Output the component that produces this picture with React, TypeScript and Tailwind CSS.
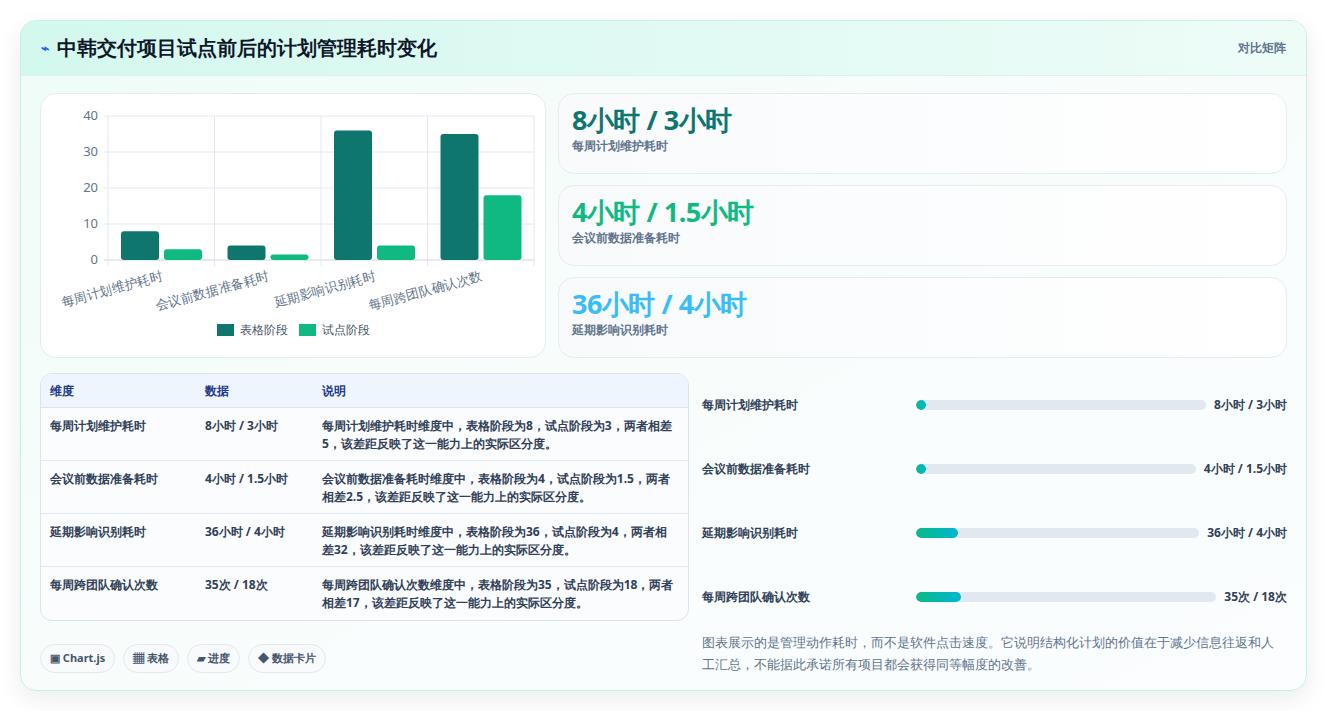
import React from 'react';

const cats = ['每周计划维护耗时', '会议前数据准备耗时', '延期影响识别耗时', '每周跨团队确认次数'];
const before = [8, 4, 36, 35];
const after = [3, 1.5, 4, 18];

const stats = [
  { v: '8小时 / 3小时', l: '每周计划维护耗时', c: 'text-[#0f766e]' },
  { v: '4小时 / 1.5小时', l: '会议前数据准备耗时', c: 'text-[#10b981]' },
  { v: '36小时 / 4小时', l: '延期影响识别耗时', c: 'text-[#38bdf8]' },
];

const rows = [
  ['每周计划维护耗时', '8小时 / 3小时', '每周计划维护耗时维度中，表格阶段为8，试点阶段为3，两者相差5，该差距反映了这一能力上的实际区分度。'],
  ['会议前数据准备耗时', '4小时 / 1.5小时', '会议前数据准备耗时维度中，表格阶段为4，试点阶段为1.5，两者相差2.5，该差距反映了这一能力上的实际区分度。'],
  ['延期影响识别耗时', '36小时 / 4小时', '延期影响识别耗时维度中，表格阶段为36，试点阶段为4，两者相差32，该差距反映了这一能力上的实际区分度。'],
  ['每周跨团队确认次数', '35次 / 18次', '每周跨团队确认次数维度中，表格阶段为35，试点阶段为18，两者相差17，该差距反映了这一能力上的实际区分度。'],
];

const progress = [
  { l: '每周计划维护耗时', v: '8小时 / 3小时', p: 3 },
  { l: '会议前数据准备耗时', v: '4小时 / 1.5小时', p: 3 },
  { l: '延期影响识别耗时', v: '36小时 / 4小时', p: 15 },
  { l: '每周跨团队确认次数', v: '35次 / 18次', p: 15 },
];

function Chart() {
  const x0 = 67, y0 = 22, w = 426, h = 144;
  const cw = w / 4;
  const y = (v: number) => y0 + h - (v / 40) * h;
  return (
    <svg width="505" height="264" className="block">
      {[0, 10, 20, 30, 40].map((t) => (
        <g key={t}>
          <line x1={x0 - 4} x2={x0 + w} y1={y(t)} y2={y(t)} stroke={t === 0 ? '#cbd5e1' : '#e2e8f0'} />
          <text x={x0 - 10} y={y(t) + 4} textAnchor="end" fontSize="13" fill="#64748b">{t}</text>
        </g>
      ))}
      {[0, 1, 2, 3, 4].map((i) => (
        <line key={i} x1={x0 + i * cw} x2={x0 + i * cw} y1={y0} y2={y0 + h + 6} stroke="#e2e8f0" />
      ))}
      {cats.map((c, i) => {
        const bx = x0 + i * cw + 13;
        return (
          <g key={c}>
            <rect x={bx} y={y(before[i])} width="38" height={y0 + h - y(before[i])} rx="3" fill="#0f766e" />
            <rect x={bx + 43} y={y(after[i])} width="38" height={y0 + h - y(after[i])} rx="3" fill="#10b981" />
            <text
              x={x0 + i * cw + cw / 2 + 2}
              y={y0 + h + 20}
              textAnchor="end"
              fontSize="13"
              fill="#64748b"
              transform={`rotate(-15 ${x0 + i * cw + cw / 2 + 2} ${y0 + h + 20})`}
            >
              {c}
            </text>
          </g>
        );
      })}
      <rect x="176" y="230" width="17" height="12" fill="#0f766e" />
      <text x="199" y="240" fontSize="12" fill="#475569">表格阶段</text>
      <rect x="258" y="230" width="17" height="12" fill="#10b981" />
      <text x="281" y="240" fontSize="12" fill="#475569">试点阶段</text>
    </svg>
  );
}

export default function App() {
  return (
    <div className="w-[1327px] h-[711px] bg-white p-5 font-['Liberation_Sans','Noto_Sans_CJK_SC',sans-serif]">
      <div className="h-[671px] rounded-2xl border border-[#c7f0e4] overflow-hidden shadow-[0_8px_24px_rgba(15,23,42,0.08)] bg-gradient-to-br from-[#effcf8] via-[#f8fdfc] to-[#fbfdff]">
        <div className="h-[55px] flex items-center justify-between px-5 bg-gradient-to-r from-[#d3f8ee] to-[#eefcf8] border-b border-[#d9f3ec]">
          <div className="flex items-center gap-2">
            <span className="text-[#2563eb] text-sm font-bold">⌁</span>
            <h1 className="text-[20px] font-bold text-[#0f172a]">中韩交付项目试点前后的计划管理耗时变化</h1>
          </div>
          <span className="text-xs font-bold text-slate-500">对比矩阵</span>
        </div>
        <div className="px-[19px] pt-[17px]">
          <div className="grid grid-cols-[506px_1fr] gap-x-[12px]">
            <div className="h-[265px] rounded-2xl border border-[#e2eef0] bg-white overflow-hidden">
              <Chart />
            </div>
            <div className="flex flex-col gap-[11px]">
              {stats.map((s) => (
                <div key={s.l} className="h-[81px] rounded-2xl border border-[#e2eef0] bg-gradient-to-r from-[#f8fafc] to-white px-[13px] pt-[9px]">
                  <div className={`text-[27px] leading-[34px] font-bold tracking-[-0.5px] ${s.c}`}>{s.v}</div>
                  <div className="text-xs font-bold text-slate-500 mt-[1px]">{s.l}</div>
                </div>
              ))}
            </div>
          </div>
          <div className="grid grid-cols-[649px_1fr] gap-x-[12px] mt-[15px]">
            <div>
              <div className="rounded-xl border border-[#dbe3ec] overflow-hidden bg-[#fbfcfe]">
                <div className="grid grid-cols-[155px_117px_1fr] h-[34px] items-center bg-[#eef5fd] border-b border-[#dbe3ec] px-[9px] text-xs font-bold text-[#1e3a8a]">
                  <div>维度</div><div>数据</div><div>说明</div>
                </div>
                {rows.map((r, i) => (
                  <div key={i} className={`grid grid-cols-[155px_117px_1fr] px-[9px] pt-[9px] h-[53px] text-xs font-bold text-slate-700 leading-[18px] ${i < 3 ? 'border-b border-[#e2e8f0]' : ''}`}>
                    <div>{r[0]}</div><div>{r[1]}</div><div className="pr-1">{r[2]}</div>
                  </div>
                ))}
              </div>
              <div className="flex gap-2 mt-[23px]">
                {['▣ Chart.js', '▦ 表格', '▰ 进度', '◆ 数据卡片'].map((t) => (
                  <span key={t} className="h-[29px] px-[9px] flex items-center rounded-full border border-[#e2e8f0] bg-[#f8fafc] text-[11px] font-bold text-slate-600">{t}</span>
                ))}
              </div>
            </div>
            <div className="pl-[1px]">
              {progress.map((p) => (
                <div key={p.l} className="h-[64px] flex items-center gap-2">
                  <div className="w-[206px] text-xs font-bold text-slate-700">{p.l}</div>
                  <div className="flex-1 h-[10px] rounded-full bg-[#e2e8f0] overflow-hidden">
                    <div className="h-full rounded-full bg-gradient-to-r from-[#10b981] to-[#06b6d4] min-w-[10px]" style={{ width: `${p.p}%` }} />
                  </div>
                  <div className="text-xs font-bold text-slate-700 whitespace-nowrap">{p.v}</div>
                </div>
              ))}
              <p className="mt-[2px] text-[13px] leading-[22px] text-slate-500 pr-1">
                图表展示的是管理动作耗时，而不是软件点击速度。它说明结构化计划的价值在于减少信息往返和人工汇总，不能据此承诺所有项目都会获得同等幅度的改善。
              </p>
            </div>
          </div>
        </div>
      </div>
    </div>
  );
}
